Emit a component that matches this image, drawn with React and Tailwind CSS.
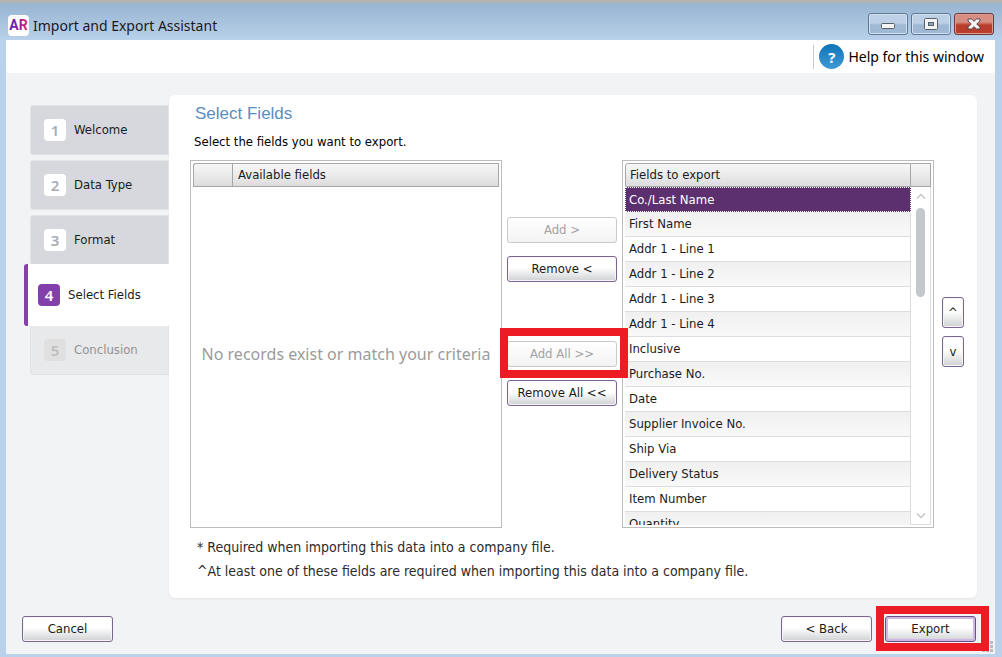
const STEPS = [
  { label: 'Welcome', state: 'done' },
  { label: 'Data Type', state: 'done' },
  { label: 'Format', state: 'done' },
  { label: 'Select Fields', state: 'current' },
  { label: 'Conclusion', state: 'disabled' },
];

const FIELDS = [
  'Co./Last Name',
  'First Name',
  'Addr 1 - Line 1',
  'Addr 1 - Line 2',
  'Addr 1 - Line 3',
  'Addr 1 - Line 4',
  'Inclusive',
  'Purchase No.',
  'Date',
  'Supplier Invoice No.',
  'Ship Via',
  'Delivery Status',
  'Item Number',
  'Quantity',
];

const HEADER = 'bg-linear-to-b from-[#f7f7f7] via-[#ebebeb] to-[#dcdcdc] border-[#a6a6a6]';

function PushButton({ children, className = '', disabled = false, primary = false, ...rest }) {
  let look =
    'border-[#7c6592] bg-linear-to-b from-white from-45% to-[#cfd1d2] text-[#1b1b1b] shadow-[inset_0_0_0_1px_#f6f6f8]';
  if (disabled) look = 'border-[#c9c9c9] bg-linear-to-b from-white to-[#f3f3f4] text-[#a3a3a3]';
  if (primary)
    look =
      'border-[#6b5283] bg-linear-to-b from-white from-45% to-[#cfd1d2] text-[#1b1b1b] shadow-[inset_0_0_0_2px_#cfb6e6]';
  return (
    <button
      type="button"
      disabled={disabled}
      className={`flex h-[26px] items-center justify-center rounded-[3px] border ${look} ${className}`}
      {...rest}
    >
      {children}
    </button>
  );
}

function Highlight({ className }) {
  return <div className={`pointer-events-none absolute z-20 border-8 border-[#ed1c24] ${className}`} />;
}

function TitleBar() {
  const glass =
    'flex h-[22px] w-10 items-center justify-center rounded-[3px] border border-[#5f7a99] bg-linear-to-b from-[#bdd0e5] from-45% to-[#9fb9d5] to-55% shadow-[inset_0_0_0_1px_#d3e1f0]';
  return (
    <header className="flex h-10 items-center gap-1 border-t-[3px] border-[#b3b3b1] bg-linear-to-b from-[#98b4d1] to-[#b9d1ea] pr-2 pl-2 pt-2">
      <svg viewBox="0 0 21 21" className="size-[21px]" role="img" aria-label="AR">
        <defs>
          <linearGradient id="ar" x1="0" x2="1">
            <stop offset="0" stopColor="#5a1fb0" />
            <stop offset="0.5" stopColor="#8a1fa8" />
            <stop offset="1" stopColor="#ee1f6b" />
          </linearGradient>
        </defs>
        <rect width="21" height="21" rx="4" fill="#fff" />
        <text x="10.5" y="15" textAnchor="middle" fontFamily="Roboto, sans-serif" fontWeight="700" fontSize="14" fill="url(#ar)">
          AR
        </text>
      </svg>
      <h1 className="flex-1 font-['Noto_Sans',sans-serif] text-[14px] text-[#1a1a1a]">Import and Export Assistant</h1>
      <div className="flex gap-[3px] pb-1">
        <button type="button" aria-label="Minimize" className={glass}>
          <svg viewBox="0 0 14 6" className="mt-1 h-[6px] w-[14px]">
            <rect x="0.5" y="0.5" width="13" height="5" rx="1" fill="#f4f4f4" stroke="#56606b" />
          </svg>
        </button>
        <button type="button" aria-label="Maximize" className={glass}>
          <svg viewBox="0 0 14 12" className="h-3 w-[14px]">
            <rect x="0.5" y="0.5" width="13" height="11" rx="1" fill="#f4f4f4" stroke="#56606b" />
            <rect x="4.5" y="4.5" width="5" height="3" fill="#8fa5bd" stroke="#56606b" />
          </svg>
        </button>
        <button
          type="button"
          aria-label="Close"
          className="flex h-[22px] w-10 items-center justify-center rounded-[3px] border border-[#6d3a3c] bg-linear-to-b from-[#d98e84] from-40% to-[#b83d2b] to-55% shadow-[inset_0_0_0_1px_#dc9c92]"
        >
          <svg viewBox="0 0 14 12" className="h-3 w-[14px]">
            <path d="M1 1h3.500L7 3.300 9.500 1H13v2L9.700 6 13 9v2H9.500L7 8.700 4.500 11H1V9l3.300-3L1 3z" fill="#f4f4f4" stroke="#5a4750" strokeLinejoin="round" />
          </svg>
        </button>
      </div>
    </header>
  );
}

function Steps() {
  return (
    <nav aria-label="Steps" className="w-[145px] shrink-0 pt-[10px]">
      <ol className="flex flex-col gap-[5px]">
        {STEPS.map(({ label, state }, i) => {
          let item = 'ml-[6px] h-[50px] rounded-l-[3px] border border-[#e2e3e6] bg-[#d7d8dd] pl-[13px] text-[#1b1b1b]';
          let badge = 'bg-white text-[#a9adb3]';
          if (state === 'current') {
            item = 'relative z-10 -my-[6px] h-[62px] rounded-l-[3px] border-l-4 border-[#8440aa] bg-white pl-[10px] text-[#1b1b1b]';
            badge = 'bg-[#8440aa] text-white';
          }
          if (state === 'disabled') {
            item = 'ml-[6px] h-[50px] rounded-l-[3px] border border-[#e2e3e6] bg-[#e8e9eb] pl-[13px] text-[#929292]';
            badge = 'bg-[#e0e0e0] text-[#bdbdbd]';
          }
          return (
            <li key={label} className={`flex items-center gap-2 ${item}`} aria-current={state === 'current' ? 'step' : undefined}>
              <span className={`flex size-[22px] items-center justify-center rounded-[4px] font-['Noto_Sans',sans-serif] text-[15px] font-semibold ${badge}`}>
                {i + 1}
              </span>
              {label}
            </li>
          );
        })}
      </ol>
    </nav>
  );
}

function AvailableFields() {
  return (
    <div className="flex flex-1 flex-col border border-[#bcbcbc] bg-white p-[2px]">
      <table className="w-full border-separate border-spacing-0">
        <thead>
          <tr className="h-[24px]">
            <th aria-label="Required" className={`w-[39px] rounded-tl-[3px] border border-r-0 ${HEADER}`} />
            <th className={`border px-[5px] text-left font-normal ${HEADER}`}>Available fields</th>
          </tr>
        </thead>
      </table>
      <p className="flex flex-1 items-center justify-center pb-1 font-['Noto_Sans',sans-serif] text-[16px] whitespace-nowrap text-[#9b9b9b]">
        No records exist or match your criteria
      </p>
    </div>
  );
}

function ExportFields() {
  return (
    <div className="flex flex-1 overflow-hidden border border-[#bcbcbc] bg-white p-[2px]">
      <div className="min-w-0 flex-1 overflow-hidden">
        <table className="w-full border-separate border-spacing-0">
          <thead>
            <tr className="h-[24px]">
              <th className={`rounded-tl-[3px] border px-1 text-left font-normal ${HEADER}`}>Fields to export</th>
            </tr>
          </thead>
          <tbody>
            {FIELDS.map((field, i) => (
              <tr key={field} className="h-[25px]">
                <td
                  className={
                    i === 0
                      ? 'border border-dotted border-white bg-[#5c2f6f] px-[3px] text-white'
                      : 'border-r border-b border-[#dcdddf] px-1 text-[#1b1b1b] ' +
                        (i % 2 ? 'bg-linear-to-b from-[#f0f0f0] to-[#f9f9f9]' : 'bg-white')
                  }
                >
                  {field}
                </td>
              </tr>
            ))}
          </tbody>
        </table>
      </div>
      <div className="flex w-5 shrink-0 flex-col">
        <div className={`h-[24px] border border-l-0 ${HEADER}`} />
        <div className="flex flex-1 flex-col items-center border-r border-b border-[#dcdddf] pb-[5px] pt-[6px]">
          <button type="button" aria-label="Scroll up" className="flex h-[15px] w-full justify-center">
            <svg viewBox="0 0 10 6" className="h-[6px] w-[10px]" fill="none" stroke="#c5c8cc" strokeWidth="1.500">
              <path d="M1 5.500 5 1.500l4 4" />
            </svg>
          </button>
          <div className="h-[89px] w-[9px] rounded-full bg-[#c4c7cc]" />
          <button type="button" aria-label="Scroll down" className="mt-auto flex w-full justify-center">
            <svg viewBox="0 0 10 6" className="h-[6px] w-[10px]" fill="none" stroke="#c5c8cc" strokeWidth="1.500">
              <path d="m1 .5 4 4 4-4" />
            </svg>
          </button>
        </div>
      </div>
    </div>
  );
}

export default function App() {
  return (
    <div className="flex h-screen flex-col bg-[#bad1ea] font-['DejaVu_Sans_Condensed',Tahoma,sans-serif] text-[13px] leading-[18px]">
      <TitleBar />
      <div className="mr-[7px] mb-[3px] ml-[6px] flex min-h-0 flex-1 flex-col bg-[#f2f3f5]">
        <div className="flex h-[33px] items-center justify-end rounded-b-[3px] bg-white pr-[11px]">
          <a href="#help" className="flex h-6 items-center gap-1 border-l border-[#c9c9c9] pl-[5px] font-['Noto_Sans',sans-serif] text-[14px] text-black">
            <span className="flex size-[25px] items-center justify-center rounded-full bg-linear-to-b from-[#0a74b8] to-[#3d9ad6] text-[15px] font-bold text-white">
              ?
            </span>
            Help for this window
          </a>
        </div>

        <div className="flex min-h-0 flex-1 pt-[22px] pr-[18px] pl-[18px]">
          <Steps />
          <main className="flex min-w-0 flex-1 flex-col rounded-md bg-white pt-[9px] pr-[13px] pl-[21px] shadow-[0_1px_2px_#e2e3e6]">
            <h2 className="pl-[5px] font-['Liberation_Sans',Arial,sans-serif] text-[17px] leading-5 text-[#5a8dc0]">Select Fields</h2>
            <p className="mt-[9px] mb-[9px] pl-1 text-black">Select the fields you want to export.</p>
            <div className="flex min-h-0 flex-1 text-[#1b1b1b]">
              <AvailableFields />
              <div className="flex w-[120px] shrink-0 flex-col gap-[13px] px-[5px] pt-[57px]">
                <PushButton disabled>Add &gt;</PushButton>
                <PushButton>Remove &lt;</PushButton>
                <div className="relative mt-[46px]">
                  <PushButton disabled className="w-full">
                    Add All &gt;&gt;
                  </PushButton>
                  <Highlight className="-top-[13px] -right-[11px] -bottom-[11px] -left-[7px]" />
                </div>
                <PushButton>Remove All &lt;&lt;</PushButton>
              </div>
              <ExportFields />
              <div className="ml-2 flex w-[22px] shrink-0 flex-col gap-2 pt-[137px]">
                <PushButton className="h-[31px]" aria-label="Move up">
                  ^
                </PushButton>
                <PushButton className="h-[31px]" aria-label="Move down">
                  v
                </PushButton>
              </div>
            </div>
            <div className="mt-[10px] mb-[18px] flex flex-col gap-[6px] pl-[7px] text-[14px] leading-[18px] text-[#2b2b2b]">
              <p>* Required when importing this data into a company file.</p>
              <p>^At least one of these fields are required when importing this data into a company file.</p>
            </div>
          </main>
        </div>

        <footer className="relative flex h-14 shrink-0 items-center gap-[13px] pr-[19px] pl-4 pt-[6px]">
          <PushButton className="mr-auto w-[91px]">Cancel</PushButton>
          <PushButton className="w-[91px]">&lt; Back</PushButton>
          <div className="relative">
            <PushButton primary className="w-[91px]">
              Export
            </PushButton>
            <Highlight className="-top-[10px] -right-[13px] -bottom-[9px] -left-[9px]" />
          </div>
          <svg viewBox="0 0 11 11" className="absolute right-[2px] bottom-[2px] size-[11px]" fill="#b9bbbf">
            <path d="M8 0h3v3H8zM4 4h3v3H4zM8 4h3v3H8zM0 8h3v3H0zM4 8h3v3H4zM8 8h3v3H8z" />
          </svg>
        </footer>
      </div>
    </div>
  );
}
